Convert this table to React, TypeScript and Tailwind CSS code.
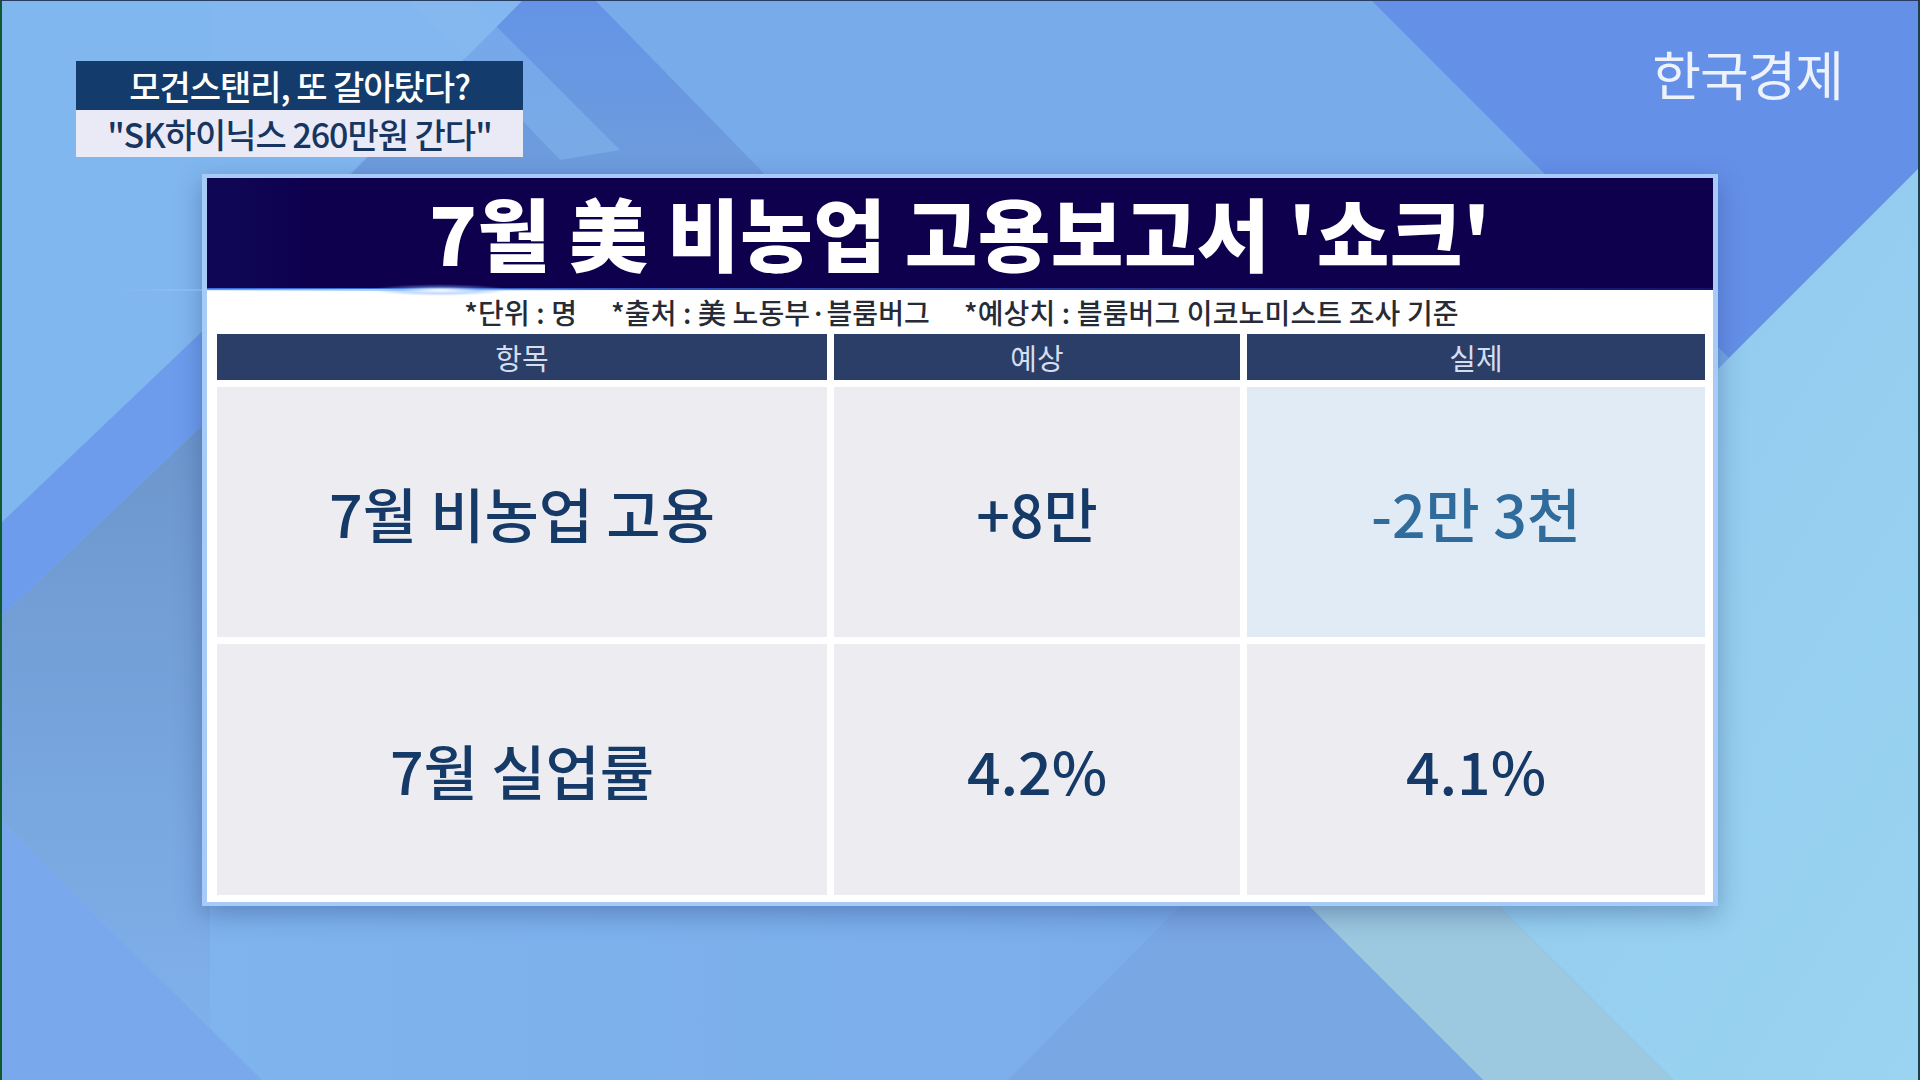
import React from "react";

function Background() {
  return (
    <svg
      className="absolute inset-0 w-[1920px] h-[1080px]"
      viewBox="0 0 1920 1080"
      preserveAspectRatio="none"
    >
      <defs>
        <linearGradient id="base" x1="0" y1="0" x2="1" y2="0">
          <stop offset="0" stopColor="#80b5ee" />
          <stop offset="0.5" stopColor="#7cafeb" />
          <stop offset="1" stopColor="#74a4e8" />
        </linearGradient>
        <linearGradient id="wedge" x1="0" y1="0" x2="0" y2="1">
          <stop offset="0" stopColor="#5f8ee6" />
          <stop offset="1" stopColor="#6d9ad8" />
        </linearGradient>
        <linearGradient id="cyan" x1="0" y1="0" x2="1" y2="1">
          <stop offset="0" stopColor="#8ec6ee" />
          <stop offset="1" stopColor="#9ad4f1" />
        </linearGradient>
        <linearGradient id="leftgray" x1="0" y1="0" x2="0" y2="1">
          <stop offset="0" stopColor="#6c96cc" />
          <stop offset="1" stopColor="#80b0ea" />
        </linearGradient>
      </defs>
      <rect x="0" y="0" width="1920" height="1080" fill="url(#base)" />
      <polygon points="0,0 523,0 0,523" fill="#82b7ef" />
      <polygon points="523,0 595,0 780,185 340,185" fill="url(#wedge)" opacity="0.85" />
      <polygon points="407,0 470,0 620,150 560,160" fill="#86b9ef" opacity="0.5" />
      <polygon points="595,0 1371,0 1560,190 780,190" fill="#78abea" />
      <polygon points="1371,0 1920,0 1920,167 1729,358" fill="#6590e8" />
      <polygon points="1920,167 1920,1080 1673,1080 1340,747" fill="url(#cyan)" />
      <polygon points="1340,747 1673,1080 1483,1080 1245,842" fill="#9cc8e0" />
      <polygon points="1180,906 1309,906 1483,1080 1008,1080" fill="#79a7e4" />
      <polygon points="0,0 210,0 210,324 0,524" fill="#81b7ef" />
      <polygon points="0,524 210,324 210,418 0,618" fill="#6d9ced" />
      <polygon points="0,618 210,418 210,1028 0,820" fill="url(#leftgray)" />
      <polygon points="0,820 262,1080 0,1080" fill="#7aa8ec" />
    </svg>
  );
}

export default function App() {
  const cell =
    "flex items-center justify-center bg-[#edecf1] text-[59px] font-medium leading-none text-[#163a68]";
  return (
    <div className="relative w-[1920px] h-[1080px] overflow-hidden font-['Noto_Sans_CJK_KR','Noto_Sans',sans-serif]">
      <Background />
      <div className="absolute left-0 top-0 bottom-0 w-[2px] bg-[#0e5a2c]" />
      <div className="absolute left-0 right-0 top-0 h-px bg-[#2a3c62]" />
      <div className="absolute right-0 top-0 bottom-0 w-[2px] bg-[#1d3f4e]" />

      <div className="relative flex flex-col">
        <div className="flex items-start justify-between pt-[61px] pl-[76px] pr-[77px]">
          <div className="flex w-[447px] flex-col">
            <div className="flex h-[49px] items-center justify-center bg-[#133c6c] text-[34px] font-medium leading-none tracking-[-0.03em] text-white">
              모건스탠리, 또 갈아탔다?
            </div>
            <div className="flex h-[47px] items-center justify-center bg-[#e9eaf6] text-[34px] font-medium leading-none tracking-[-0.03em] text-[#17355f]">
              "SK하이닉스 260만원 간다"
            </div>
          </div>
          <div className="mt-[-14px] text-[53px] font-normal leading-none tracking-[-0.02em] text-[#edf2fb]">
            한국경제
          </div>
        </div>

        <div className="ml-[202px] mt-[17px] flex h-[732px] w-[1516px] flex-col border-x-[5px] border-y-[4px] border-[#a6cbf7] bg-white shadow-[0_8px_24px_rgba(30,50,110,0.35)]">
          <div className="relative flex h-[112px] items-center justify-center bg-[#0e004c] pb-[6px] text-[79px] font-black leading-none tracking-[0.005em] text-white">
            <div className="absolute left-0 top-0 bottom-0 w-[93px] bg-gradient-to-r from-[#0f0755] to-[#0e0250]" />
            <div className="absolute left-0 right-0 bottom-0 h-[2px] bg-gradient-to-r from-[#3d6fe0] via-[#27409e] to-[#13136a]" />
            <div className="absolute left-[-90px] bottom-[-1px] h-[2px] w-[520px] bg-gradient-to-r from-transparent via-[#a8d4ff] to-transparent" />
            <div className="absolute bottom-[-6px] left-[163px] h-[12px] w-[140px] rounded-full bg-[radial-gradient(ellipse_at_center,rgba(255,255,255,0.95),rgba(120,170,255,0.45)_40%,transparent_70%)]" />
            <span className="relative">7월 美 비농업 고용보고서 '쇼크'</span>
          </div>

          <div className="flex flex-1 flex-col pl-[10px] pr-[7px] pb-[6px]">
            <div className="flex h-[44px] items-center justify-center gap-[34px] whitespace-pre text-[28px] font-medium leading-none tracking-[0.005em] text-[#272b36]">
              <span>*단위 : 명</span>
              <span>*출처 : 美 노동부·블룸버그</span>
              <span>*예상치 : 블룸버그 이코노미스트 조사 기준</span>
            </div>
            <div className="grid grid-cols-[610px_406px_458px] grid-rows-[46px_250px_251px] gap-x-[7px] gap-y-[7px]">
              <div className="flex items-center justify-center bg-[#2b3e67] text-[29px] leading-none text-[#d5ddef]">항목</div>
              <div className="flex items-center justify-center bg-[#2b3e67] text-[29px] leading-none text-[#d5ddef]">예상</div>
              <div className="flex items-center justify-center bg-[#2b3e67] text-[29px] leading-none text-[#d5ddef]">실제</div>

              <div className={cell}>7월 비농업 고용</div>
              <div className={cell}>+8만</div>
              <div className="flex items-center justify-center bg-[#e1ebf5] text-[59px] font-medium leading-none text-[#2f6b9b]">
                -2만 3천
              </div>

              <div className={cell}>7월 실업률</div>
              <div className={cell}>4.2%</div>
              <div className={cell}>4.1%</div>
            </div>
          </div>
        </div>
      </div>
    </div>
  );
}
